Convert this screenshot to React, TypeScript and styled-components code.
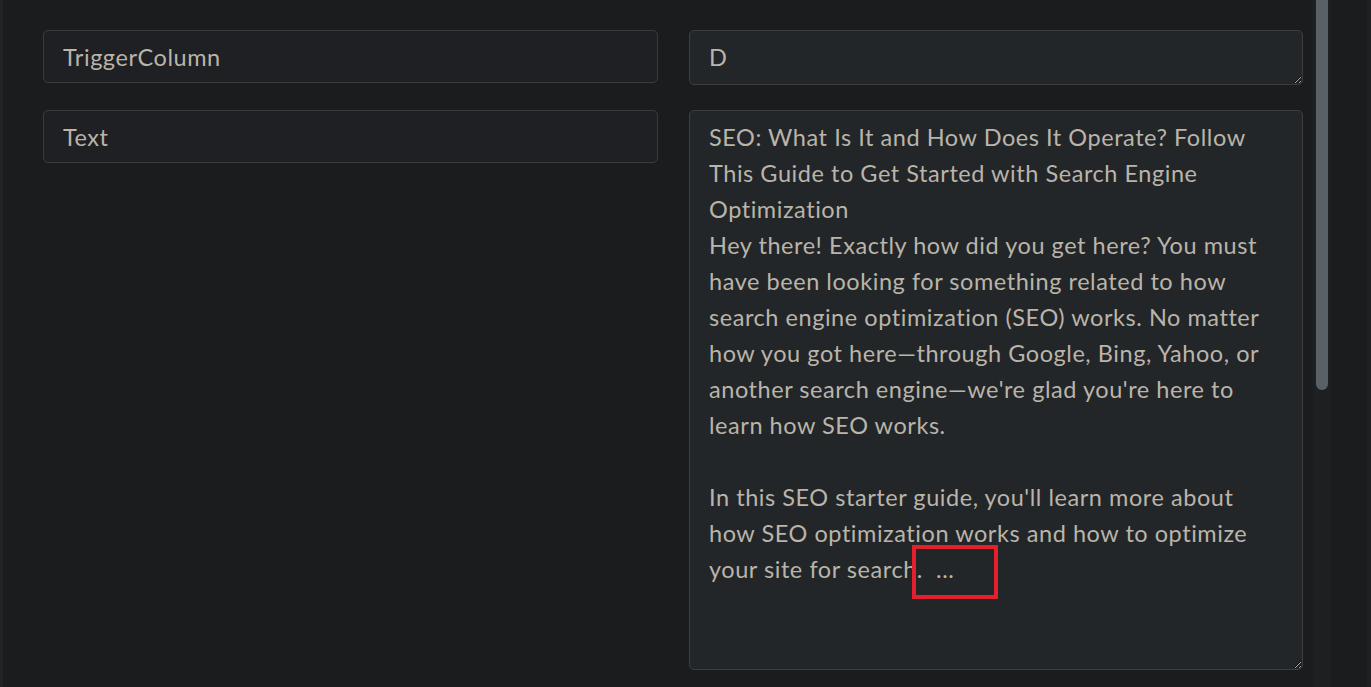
import React from "react";
import styled, { createGlobalStyle } from "styled-components";

const Global = createGlobalStyle`
  html, body { margin: 0; padding: 0; background: #1b1c1e; height: 100%; overflow: hidden; }
  #root { height: 100%; }
  * { box-sizing: border-box; }
`;

const Page = styled.div`
  display: flex;
  height: 687px;
  width: 1371px;
  background: #1b1c1e;
  color-scheme: dark;
  font-family: Lato, "Open Sans", sans-serif;
`;

const EdgeStripe = styled.div`
  width: 3px;
  background: #222327;
  flex: none;
`;

const Content = styled.div`
  flex: none;
  width: 1310px;
  padding: 30px 10px 0 40px;
`;

const Grid = styled.div`
  display: grid;
  grid-template-columns: 615px 614px;
  column-gap: 31px;
  row-gap: 25px;
  align-items: start;
`;

const fieldText = `
  font-family: Lato, "Open Sans", sans-serif;
  font-size: 23.5px;
  letter-spacing: 0.55px;
  color: #bab4aa;
  outline: none;
`;

const TextInput = styled.input`
  ${fieldText}
  width: 100%;
  height: 53px;
  padding: 0 19px;
  background: #1f2023;
  border: 1px solid #3a3b3f;
  border-radius: 5px;
`;

const Area = styled.textarea<{ $h: number }>`
  ${fieldText}
  display: block;
  width: 100%;
  height: ${(p) => p.$h}px;
  padding: 8px 19px;
  line-height: 36px;
  background: #232628;
  border: 1px solid #3b3e41;
  border-radius: 5px;
  resize: vertical;
  overflow: hidden;
`;

const AreaWrap = styled.div`
  position: relative;
`;

const Highlight = styled.div`
  position: absolute;
  left: 223px;
  top: 435px;
  width: 86px;
  height: 54px;
  border: 4px solid #e3202b;
  pointer-events: none;
`;

const Track = styled.div`
  flex: none;
  width: 18px;
  background: #1e1f21;
  display: flex;
  justify-content: center;
`;

const Thumb = styled.div`
  width: 12px;
  height: 390px;
  background: #596166;
  border-radius: 0 0 6px 6px;
`;

const RightGutter = styled.div`
  flex: 1;
  background: #1b1c1e;
  border-right: 4px solid #1f2022;
`;

const longText = `SEO: What Is It and How Does It Operate? Follow This Guide to Get Started with Search Engine Optimization
Hey there! Exactly how did you get here? You must have been looking for something related to how search engine optimization (SEO) works. No matter how you got here—through Google, Bing, Yahoo, or another search engine—we're glad you're here to learn how SEO works.

In this SEO starter guide, you'll learn more about how SEO optimization works and how to optimize your site for search.  ...`;

export default function App() {
  return (
    <>
      <Global />
      <Page>
        <EdgeStripe />
        <Content>
          <Grid>
            <TextInput defaultValue="TriggerColumn" readOnly />
            <Area $h={55} defaultValue="D" readOnly />
            <TextInput defaultValue="Text" readOnly />
            <AreaWrap>
              <Area $h={560} defaultValue={longText} readOnly />
              <Highlight />
            </AreaWrap>
          </Grid>
        </Content>
        <Track>
          <Thumb />
        </Track>
        <RightGutter />
      </Page>
    </>
  );
}
